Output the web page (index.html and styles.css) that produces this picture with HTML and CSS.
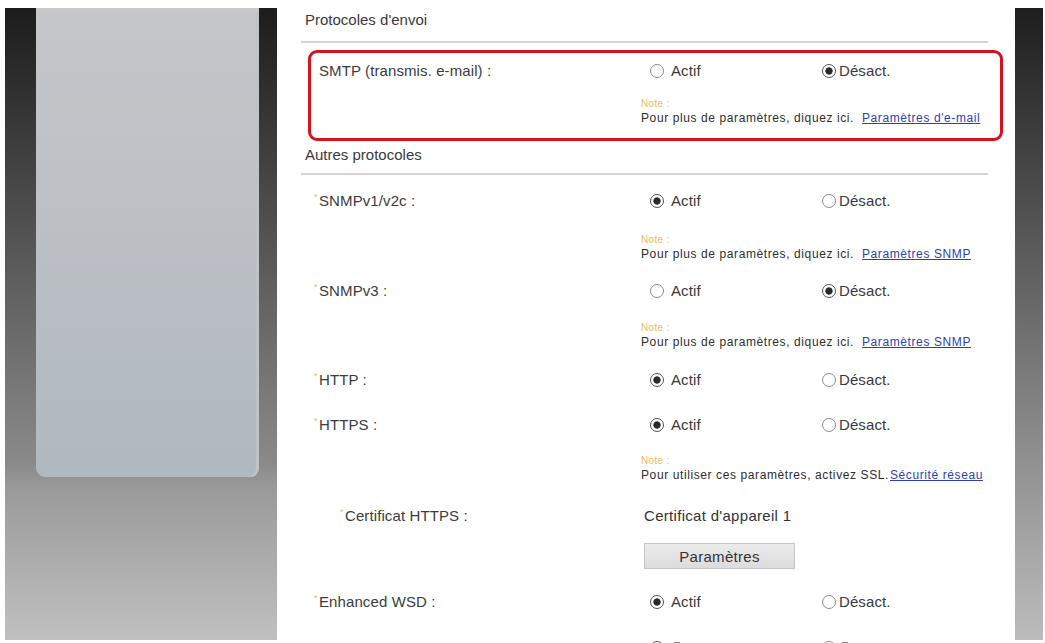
FILE: index.html
```html
<!DOCTYPE html>
<html lang="fr">
<head>
<meta charset="utf-8">
<title>Protocoles</title>
<link rel="stylesheet" href="styles.css">
</head>
<body>
<div class="page">
  <aside class="sidebar"><div class="sidebar-inner"></div></aside>
  <main class="content">
    <h2 class="section-title title-first">Protocoles d'envoi</h2>
    <div class="highlight">
      <div class="row row-smtp">
        <div class="label">SMTP (transmis. e-mail) :</div>
        <div class="options">
          <span class="opt opt-a"><span class="radio"></span><span class="opt-text gap-wide">Actif</span></span>
          <span class="opt"><span class="radio checked"></span><span class="opt-text">Désact.</span></span>
        </div>
      </div>
      <div class="row note-row note-smtp">
        <div></div>
        <div class="note">
          <div class="note-title">Note :</div>
          <div class="note-text">Pour plus de paramètres, diquez ici. <a class="link" href="#">Paramètres d'e-mail</a></div>
        </div>
      </div>
    </div>

    <h2 class="section-title title-second">Autres protocoles</h2>
    <div class="section-body">
      <div class="row r-snmp1">
        <div class="label"><span class="req">*</span>SNMPv1/v2c :</div>
        <div class="options">
          <span class="opt opt-a"><span class="radio checked"></span><span class="opt-text gap-wide">Actif</span></span>
          <span class="opt"><span class="radio"></span><span class="opt-text">Désact.</span></span>
        </div>
      </div>
      <div class="row note-row n-snmp1">
        <div></div>
        <div class="note">
          <div class="note-title">Note :</div>
          <div class="note-text">Pour plus de paramètres, diquez ici. <a class="link" href="#">Paramètres SNMP</a></div>
        </div>
      </div>
      <div class="row r-snmp3">
        <div class="label"><span class="req">*</span>SNMPv3 :</div>
        <div class="options">
          <span class="opt opt-a"><span class="radio"></span><span class="opt-text gap-wide">Actif</span></span>
          <span class="opt"><span class="radio checked"></span><span class="opt-text">Désact.</span></span>
        </div>
      </div>
      <div class="row note-row n-snmp3">
        <div></div>
        <div class="note">
          <div class="note-title">Note :</div>
          <div class="note-text">Pour plus de paramètres, diquez ici. <a class="link" href="#">Paramètres SNMP</a></div>
        </div>
      </div>
      <div class="row r-http">
        <div class="label"><span class="req">*</span>HTTP :</div>
        <div class="options">
          <span class="opt opt-a"><span class="radio checked"></span><span class="opt-text gap-wide">Actif</span></span>
          <span class="opt"><span class="radio"></span><span class="opt-text">Désact.</span></span>
        </div>
      </div>
      <div class="row r-https">
        <div class="label"><span class="req">*</span>HTTPS :</div>
        <div class="options">
          <span class="opt opt-a"><span class="radio checked"></span><span class="opt-text gap-wide">Actif</span></span>
          <span class="opt"><span class="radio"></span><span class="opt-text">Désact.</span></span>
        </div>
      </div>
      <div class="row note-row n-https">
        <div></div>
        <div class="note">
          <div class="note-title">Note :</div>
          <div class="note-text">Pour utiliser ces paramètres, activez SSL.<a class="link" href="#">Sécurité réseau</a></div>
        </div>
      </div>
      <div class="row r-cert">
        <div class="label label-sub"><span class="req">*</span>Certificat HTTPS :</div>
        <div class="value">Certificat d'appareil 1</div>
      </div>
      <div class="row r-button">
        <div></div>
        <div><button class="btn" type="button">Paramètres</button></div>
      </div>
      <div class="row r-wsd">
        <div class="label"><span class="req">*</span>Enhanced WSD :</div>
        <div class="options">
          <span class="opt opt-a"><span class="radio checked"></span><span class="opt-text gap-wide">Actif</span></span>
          <span class="opt"><span class="radio"></span><span class="opt-text">Désact.</span></span>
        </div>
      </div>
      <div class="row r-next">
        <div></div>
        <div class="options">
          <span class="opt opt-a"><span class="radio checked"></span><span class="stub"></span></span>
          <span class="opt"><span class="radio"></span><span class="stub stub-d"></span></span>
        </div>
      </div>
    </div>
  </main>
  <div class="scrollbar"></div>
</div>
</body>
</html>
```

FILE: styles.css
```css
* { box-sizing: border-box; }

html, body {
  margin: 0;
  padding: 0;
  background: #ffffff;
}

body {
  font-family: "Liberation Sans", Arial, sans-serif;
  color: #3c3c3c;
  width: 1045px;
  height: 643px;
  overflow: hidden;
}

.page {
  display: flex;
  align-items: flex-start;
  height: 643px;
}

/* ---------- left panel ---------- */
.sidebar {
  flex: 0 0 272px;
  height: 632px;
  margin: 8px 0 0 5px;
  background: linear-gradient(to bottom, #1c1c1c 0%, #4a4a4a 30%, #8a8a8a 72%, #9a9a9a 76%, #c0c0c0 100%);
}

.sidebar-inner {
  margin-left: 31px;
  width: 223px;
  height: 469px;
  border-radius: 0 0 9px 9px;
  background: linear-gradient(to bottom, #c5c7ca 0%, #bcc0c5 45%, #b0b8c0 100%);
  box-shadow: inset 0 4px 0 #c9c9c9, inset -3px 0 0 #c0c3c6;
}

/* ---------- right bar ---------- */
.scrollbar {
  flex: 0 0 28px;
  height: 632px;
  margin: 8px 2px 0 0;
  background: linear-gradient(to bottom, #1e1e1e 0%, #555555 35%, #8e8e8e 70%, #bcbcbc 100%);
}

/* ---------- content ---------- */
.content {
  flex: 1 1 auto;
  min-width: 0;
  height: 643px;
  overflow: hidden;
}

.section-title {
  margin: 0 27px 0 24px;
  padding: 0 0 0 4px;
  font-size: 15px;
  font-weight: normal;
  line-height: 20px;
  color: #3a3a3a;
  border-bottom: 2px solid #d4d4d4;
}

.title-first {
  padding-top: 10px;
  padding-bottom: 11px;
}

.title-second {
  padding-top: 4px;
  padding-bottom: 8px;
}

.highlight {
  margin: 7px 12px 0 31px;
  height: 91px;
  border: 3px solid #d3141d;
  border-radius: 9px;
  padding: 0 0 0 8px;
}

.row {
  display: grid;
  grid-template-columns: 330px 1fr;
  font-size: 15px;
  line-height: 20px;
  height: 20px;
  letter-spacing: 0.1px;
}

.highlight .row {
  grid-template-columns: 325px 1fr;
}

.row-smtp { margin-top: 8px; }
.note-smtp { margin-top: 17px; }

.section-body {
  padding-left: 37px;
}

.r-snmp1 { margin-top: 16px; }
.n-snmp1 { margin-top: 23px; }
.r-snmp3 { margin-top: 19px; }
.n-snmp3 { margin-top: 21px; }
.r-http { margin-top: 20px; }
.r-https { margin-top: 25px; }
.n-https { margin-top: 20px; }
.r-cert { margin-top: 23px; }
.r-button { margin-top: 17px; height: 26px; }
.r-wsd { margin-top: 23px; }
.r-next { margin-top: 26px; }

.label {
  white-space: nowrap;
}

.label-sub {
  padding-left: 26px;
}

.req {
  display: inline-block;
  color: #f2b85a;
  font-size: 9px;
  line-height: 10px;
  vertical-align: top;
  margin-top: 1px;
  width: 5px;
}

.options {
  display: flex;
  align-items: center;
  height: 20px;
}

.opt {
  display: inline-flex;
  align-items: center;
}

.opt-a {
  width: 172px;
}

.radio {
  display: inline-block;
  width: 14px;
  height: 14px;
  margin-left: 6px;
  border-radius: 50%;
  border: 1px solid #8c8c8c;
  background: #ffffff;
}

.radio.checked {
  border-color: #555555;
  background: radial-gradient(circle, #2a2a2a 0 3.3px, #ffffff 4px);
}

.stub {
  display: inline-block;
  width: 6px;
  height: 12px;
  margin-left: 10px;
  border-top: 1px solid #888888;
}

.stub-d {
  margin-left: 6px;
}

.opt-text {
  margin-left: 3px;
  color: #3a3a3a;
}

.opt-text.gap-wide {
  margin-left: 7px;
}

.value {
  color: #333333;
  letter-spacing: 0.3px;
}

.note-row {
  height: 28px;
}

.note {
  white-space: nowrap;
  margin-left: -3px;
}

.note-title {
  font-size: 10px;
  line-height: 12px;
  color: #f2b85a;
  letter-spacing: 0.3px;
}

.note-text {
  font-size: 12px;
  line-height: 16px;
  letter-spacing: 0.6px;
  color: #2e2e2e;
}

.link {
  color: #2d3fb5;
  text-decoration: underline;
  margin-left: 4px;
}

.n-https .link {
  margin-left: 1px;
}

.btn {
  display: block;
  width: 151px;
  height: 26px;
  margin: 0;
  padding: 0;
  font-family: "Liberation Sans", Arial, sans-serif;
  font-size: 15px;
  letter-spacing: 0.3px;
  color: #333333;
  background: linear-gradient(to bottom, #ebebeb, #dcdcdc);
  border: 1px solid #c6c6c6;
  border-radius: 0;
}
```
